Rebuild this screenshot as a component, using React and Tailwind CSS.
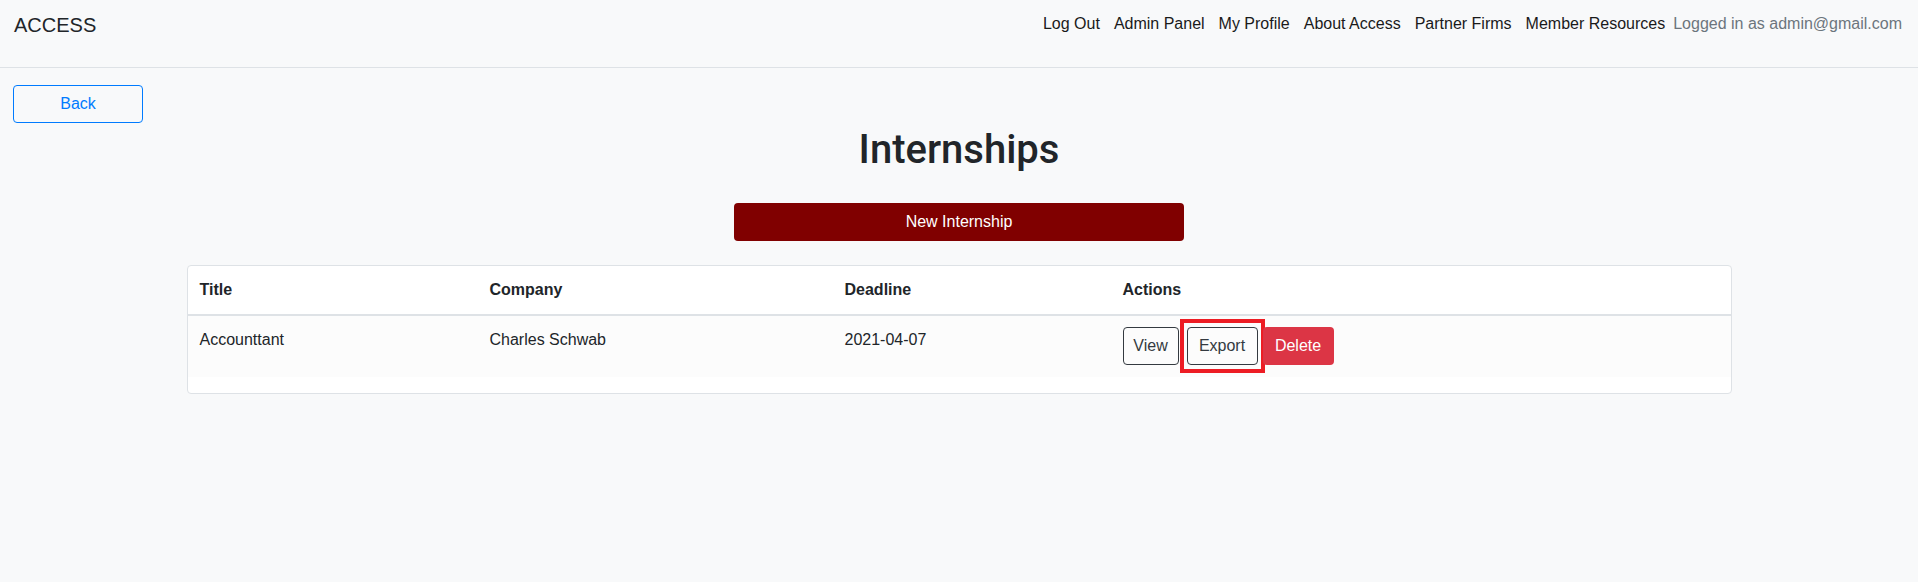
import React from 'react';

const navLinks = ['Log Out', 'Admin Panel', 'My Profile', 'About Access', 'Partner Firms', 'Member Resources'];

const internships = [
  { title: 'Accounttant', company: 'Charles Schwab', deadline: '2021-04-07' },
];

export default function App() {
  return (
    <div className="min-h-[582px] bg-[#f8f9fa] text-[#212529] font-['Segoe_UI','Liberation_Sans',sans-serif]">
      {/* Navbar */}
      <nav className="h-[68px] border-b border-[#dee2e6] flex items-start justify-between pl-[14px] pr-[16px]">
        <a className="mt-[10px] text-[20px] leading-[30px] text-[#212529]">ACCESS</a>
        <div className="flex items-center mt-[12px] text-[16px] leading-[24px]">
          <div className="flex gap-[14px]">
            {navLinks.map((l) => (
              <a key={l} className="text-[#1a1a1a] cursor-pointer">
                {l}
              </a>
            ))}
          </div>
          <span className="ml-2 text-[#6c757d]">Logged in as admin@gmail.com</span>
        </div>
      </nav>

      {/* Main */}
      <main className="pt-[17px]">
        <div className="pl-[13px]">
          <button className="w-[130px] h-[38px] rounded-[4px] border border-[#007bff] text-[#007bff] text-[16px]">
            Back
          </button>
        </div>

        <h1 className="mt-[3px] text-center text-[40px] leading-[48px] font-medium font-['Roboto','Liberation_Sans',sans-serif]">
          Internships
        </h1>

        <div className="mt-[29px] flex justify-center">
          <button className="w-[450px] h-[38px] rounded-[4px] bg-[#800000] text-white text-[16px]">
            New Internship
          </button>
        </div>

        {/* Table card */}
        <div className="mt-[24px] mx-auto w-[1545px] bg-white border border-[#dee2e6] rounded-[4px] pb-4">
          <table className="w-full text-[16px] leading-[24px] border-collapse">
            <thead>
              <tr className="border-b-2 border-[#dee2e6]">
                <th className="w-[290px] text-left font-bold p-3">Title</th>
                <th className="w-[355px] text-left font-bold p-3">Company</th>
                <th className="w-[278px] text-left font-bold p-3">Deadline</th>
                <th className="text-left font-bold p-3">Actions</th>
              </tr>
            </thead>
            <tbody>
              {internships.map((row) => (
                <tr key={row.title} className="bg-[#fcfcfc] align-top">
                  <td className="p-3">{row.title}</td>
                  <td className="p-3">{row.company}</td>
                  <td className="p-3">{row.deadline}</td>
                  <td className="px-3 pt-[11px] pb-3">
                    <div className="flex items-center">
                      <button className="w-[56px] h-[38px] rounded-[4px] border border-[#343a40] text-[#343a40] bg-transparent">
                        View
                      </button>
                      <div className="relative ml-2">
                        <button className="w-[71px] h-[38px] rounded-[4px] border border-[#343a40] text-[#343a40] bg-transparent">
                          Export
                        </button>
                        {/* highlight annotation */}
                        <div className="absolute -left-[7px] -right-[7px] -top-[8px] -bottom-[8px] border-4 border-[#ed1c24] pointer-events-none" />
                      </div>
                      <button className="ml-[5px] w-[71px] h-[38px] rounded-[4px] bg-[#dc3545] text-white relative z-0">
                        Delete
                      </button>
                    </div>
                  </td>
                </tr>
              ))}
            </tbody>
          </table>
        </div>
      </main>
    </div>
  );
}
